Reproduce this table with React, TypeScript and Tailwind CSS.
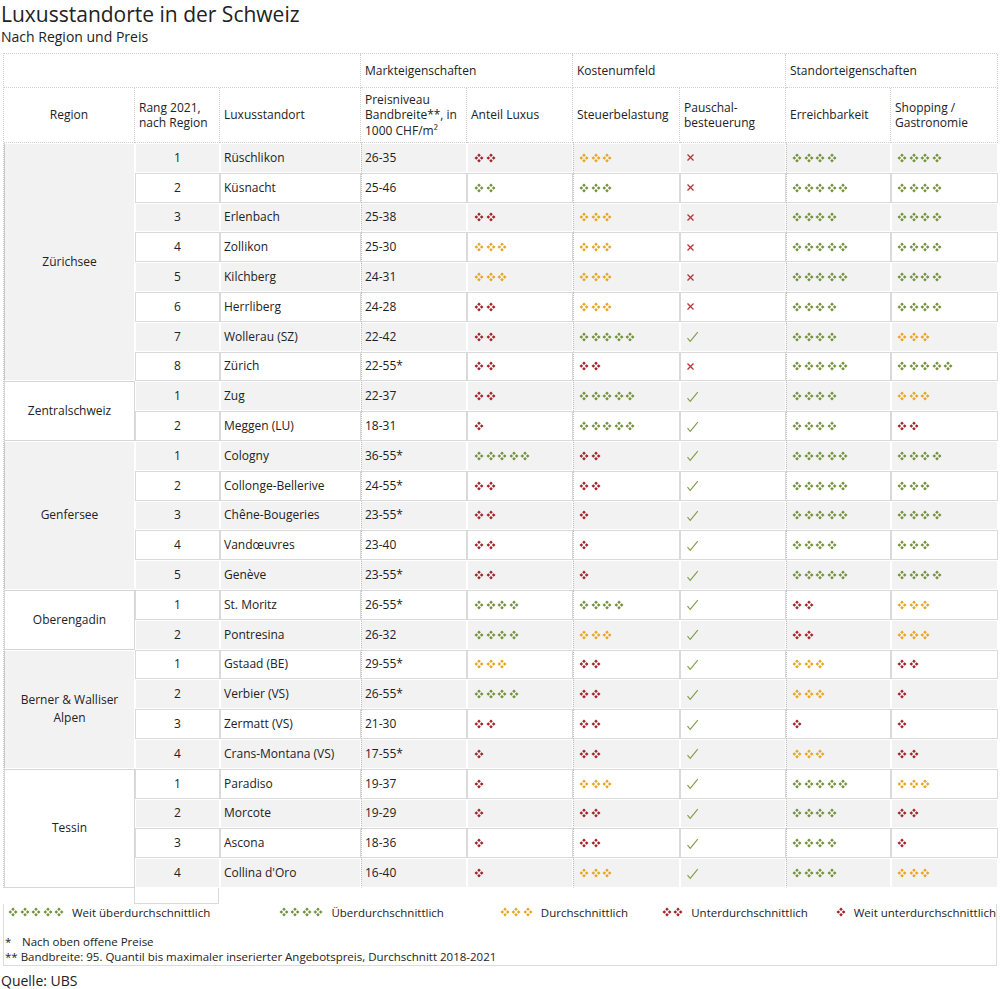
import React from 'react'

const COLORS: Record<string, string> = { g: '#72913a', y: '#e8a520', r: '#a32328' }

type Row = [string, string, string, string, string, boolean, string, string]

const regions: { name: string; rows: Row[] }[] = [
  {
    name: 'Zürichsee',
    rows: [
      ['1', 'Rüschlikon', '26-35', '2r', '3y', false, '4g', '4g'],
      ['2', 'Küsnacht', '25-46', '2g', '3g', false, '5g', '4g'],
      ['3', 'Erlenbach', '25-38', '2r', '3y', false, '4g', '4g'],
      ['4', 'Zollikon', '25-30', '3y', '3y', false, '5g', '4g'],
      ['5', 'Kilchberg', '24-31', '3y', '3y', false, '5g', '4g'],
      ['6', 'Herrliberg', '24-28', '2r', '3y', false, '4g', '4g'],
      ['7', 'Wollerau (SZ)', '22-42', '2r', '5g', true, '4g', '3y'],
      ['8', 'Zürich', '22-55*', '2r', '2r', false, '5g', '5g'],
    ],
  },
  {
    name: 'Zentralschweiz',
    rows: [
      ['1', 'Zug', '22-37', '2r', '5g', true, '4g', '3y'],
      ['2', 'Meggen (LU)', '18-31', '1r', '5g', true, '4g', '2r'],
    ],
  },
  {
    name: 'Genfersee',
    rows: [
      ['1', 'Cologny', '36-55*', '5g', '2r', true, '5g', '4g'],
      ['2', 'Collonge-Bellerive', '24-55*', '2r', '2r', true, '5g', '3g'],
      ['3', 'Chêne-Bougeries', '23-55*', '2r', '1r', true, '5g', '4g'],
      ['4', 'Vandœuvres', '23-40', '2r', '1r', true, '4g', '3g'],
      ['5', 'Genève', '23-55*', '2r', '1r', true, '5g', '4g'],
    ],
  },
  {
    name: 'Oberengadin',
    rows: [
      ['1', 'St. Moritz', '26-55*', '4g', '4g', true, '2r', '3y'],
      ['2', 'Pontresina', '26-32', '4g', '3y', true, '2r', '3y'],
    ],
  },
  {
    name: 'Berner & Walliser Alpen',
    rows: [
      ['1', 'Gstaad (BE)', '29-55*', '3y', '2r', true, '3y', '2r'],
      ['2', 'Verbier (VS)', '26-55*', '4g', '2r', true, '3y', '1r'],
      ['3', 'Zermatt (VS)', '21-30', '2r', '2r', true, '1r', '1r'],
      ['4', 'Crans-Montana (VS)', '17-55*', '1r', '2r', true, '3y', '2r'],
    ],
  },
  {
    name: 'Tessin',
    rows: [
      ['1', 'Paradiso', '19-37', '1r', '3y', true, '5g', '3y'],
      ['2', 'Morcote', '19-29', '1r', '2r', true, '4g', '2r'],
      ['3', 'Ascona', '18-36', '1r', '2r', true, '4g', '1r'],
      ['4', "Collina d'Oro", '16-40', '1r', '3y', true, '4g', '3y'],
    ],
  },
]

const spans: Record<number, string> = {
  2: 'row-span-2',
  4: 'row-span-4',
  5: 'row-span-5',
  8: 'row-span-8',
}

function Dots({ v }: { v: string }) {
  const n = Number(v[0])
  const color = COLORS[v[1]]
  return (
    <span className="flex gap-[1.5px]">
      {Array.from({ length: n }).map((_, i) => (
        <svg key={i} width="10" height="10" viewBox="0 0 10 10">
          <path
            d="M5 0.5L6.8 2.3L5 4.1L3.2 2.3Z M2.3 3.2L4.1 5L2.3 6.8L0.5 5Z M7.7 3.2L9.5 5L7.7 6.8L5.9 5Z M5 5.9L6.8 7.7L5 9.5L3.2 7.7Z"
            fill={color}
          />
        </svg>
      ))}
    </span>
  )
}

function Check() {
  return (
    <svg width="13" height="13" viewBox="0 0 13 13">
      <path d="M1.5 8.2L4.2 11.4L11.8 2.2" fill="none" stroke="#7f9c45" strokeWidth="1.1" />
    </svg>
  )
}

function Cross() {
  return (
    <svg width="9" height="9" viewBox="0 0 9 9">
      <path d="M1.5 1.5L7.5 7.5M7.5 1.5L1.5 7.5" stroke="#b0383a" strokeWidth="1.3" />
    </svg>
  )
}

const hd = 'border-r border-b border-dotted border-[#cfcfcf] flex items-center px-[4px] leading-[15.5px]'

export default function App() {
  let idx = 0
  return (
    <div className="w-[1000px] h-[989px] bg-white text-[#222] font-['Open_Sans',sans-serif] overflow-hidden">
      <h1 className="text-[21px] leading-[28px] pl-[1px]">Luxusstandorte in der Schweiz</h1>
      <p className="text-[14px] leading-[18px] pl-[1px]">Nach Region und Preis</p>

      <div className="ml-[3px] mt-[7px] w-[994px] text-[12px]">
        <div className="grid grid-cols-[131px_85px_141px_106px_106px_107px_106px_105px_107px] grid-rows-[34px_55px_repeat(25,29.8px)] border-t border-l border-dotted border-[#cfcfcf]">
          <div className={`${hd} col-span-3`} />
          <div className={`${hd} col-span-2`}>Markteigenschaften</div>
          <div className={`${hd} col-span-2`}>Kostenumfeld</div>
          <div className={`${hd} col-span-2`}>Standorteigenschaften</div>

          <div className={`${hd} justify-center`}>Region</div>
          <div className={hd}>
            Rang 2021,
            <br />
            nach Region
          </div>
          <div className={hd}>Luxusstandort</div>
          <div className={hd}>Preisniveau Bandbreite**, in 1000 CHF/m²</div>
          <div className={hd}>Anteil Luxus</div>
          <div className={hd}>Steuerbelastung</div>
          <div className={hd}>
            Pauschal-
            <br />
            besteuerung
          </div>
          <div className={hd}>Erreichbarkeit</div>
          <div className={hd}>
            Shopping /
            <br />
            Gastronomie
          </div>

          {regions.map((reg, ri) => {
            const regGray = ri % 2 === 0
            return (
              <React.Fragment key={reg.name}>
                <div
                  className={`col-start-1 ${spans[reg.rows.length]} flex items-center justify-center text-center px-3 border ${
                    regGray ? 'bg-[#f2f2f2] border-white border-l-[#c8c8c8]' : 'bg-white border-[#d6d6d6]'
                  }`}
                >
                  {reg.name}
                </div>
                {reg.rows.map((r) => {
                  const gray = idx % 2 === 0
                  idx++
                  const cell = `flex items-center border ${
                    gray ? 'bg-[#f2f2f2] border-white' : 'bg-white border-[#dadada]'
                  }`
                  const grp = `${cell} ![border-left-style:dotted] border-l-[#bdbdbd]`
                  return (
                    <React.Fragment key={r[1]}>
                      <div className={`${cell} col-start-2 justify-center`}>{r[0]}</div>
                      <div className={`${cell} pl-[3px]`}>{r[1]}</div>
                      <div className={`${grp} pl-[3px]`}>{r[2]}</div>
                      <div className={`${cell} pl-[6px]`}>
                        <Dots v={r[3]} />
                      </div>
                      <div className={`${grp} pl-[5px]`}>
                        <Dots v={r[4]} />
                      </div>
                      <div className={`${cell} pl-[5px]`}>{r[5] ? <Check /> : <Cross />}</div>
                      <div className={`${grp} pl-[5px]`}>
                        <Dots v={r[6]} />
                      </div>
                      <div className={`${cell} pl-[5px]`}>
                        <Dots v={r[7]} />
                      </div>
                    </React.Fragment>
                  )
                })}
              </React.Fragment>
            )
          })}
        </div>

        <div className="flex h-[16px]">
          <div className="w-[131px]" />
          <div className="w-[85px] border border-t-0 border-[#dadada]" />
        </div>

        <div className="border-x border-b border-[#dcdcdc] text-[11.5px]">
          <div className="flex items-center h-[17px] pl-[4px]">
            <div className="w-[271px] flex items-center gap-[8px]">
              <Dots v="5g" />
              <span>Weit überdurchschnittlich</span>
            </div>
            <div className="w-[221px] flex items-center gap-[8px]">
              <Dots v="4g" />
              <span>Überdurchschnittlich</span>
            </div>
            <div className="w-[162px] flex items-center gap-[8px]">
              <Dots v="3y" />
              <span>Durchschnittlich</span>
            </div>
            <div className="w-[174px] flex items-center gap-[8px]">
              <Dots v="2r" />
              <span>Unterdurchschnittlich</span>
            </div>
            <div className="flex items-center gap-[8px] whitespace-nowrap">
              <Dots v="1r" />
              <span>Weit unterdurchschnittlich</span>
            </div>
          </div>
          <div className="pt-[13px] pb-[1px] text-[11.5px] leading-[15px] pl-[1px]">
            <div className="flex">
              <span className="w-[17px]">*</span>
              <span>Nach oben offene Preise</span>
            </div>
            <div>** Bandbreite: 95. Quantil bis maximaler inserierter Angebotspreis, Durchschnitt 2018-2021</div>
          </div>
        </div>
      </div>
      <p className="text-[14px] leading-[17px] pl-[1px] mt-[6px]">Quelle: UBS</p>
    </div>
  )
}
